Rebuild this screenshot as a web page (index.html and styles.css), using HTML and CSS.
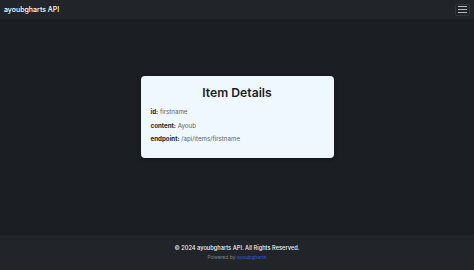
FILE: index.html
```html
<!DOCTYPE html>
<html lang="en">
<head>
<meta charset="utf-8">
<title>Item Details</title>
<link rel="stylesheet" href="styles.css">
</head>
<body>
<nav class="navbar">
  <span class="brand">ayoubgharts API</span>
  <button class="toggler" aria-label="menu">
    <span class="bar"></span><span class="bar"></span><span class="bar"></span>
  </button>
</nav>
<main class="main">
  <section class="card">
    <h1 class="title">Item Details</h1>
    <p class="field"><strong>id:</strong> <span class="val">firstname</span></p>
    <p class="field"><strong>content:</strong> <span class="val">Ayoub</span></p>
    <p class="field"><strong>endpoint:</strong> <span class="val">/api/items/firstname</span></p>
  </section>
</main>
<footer class="footer">
  <p class="copy">© 2024 ayoubgharts API. All Rights Reserved.</p>
  <p class="powered">Powered by <a class="link" href="#">ayoubgharts</a></p>
</footer>
</body>
</html>
```
FILE: styles.css
```css
html, body {
  margin: 0;
  padding: 0;
}
body {
  width: 474px;
  height: 270px;
  display: flex;
  flex-direction: column;
  background: #1b1e22;
  font-family: "Inter", "DejaVu Sans", sans-serif;
  color: #212529;
  overflow: hidden;
}
.navbar {
  height: 19px;
  flex: none;
  background: #212529;
  display: flex;
  align-items: center;
  justify-content: space-between;
  padding: 0 4px 0 4px;
  box-sizing: border-box;
}
.brand {
  color: #ffffff;
  font-size: 7px;
  font-weight: 500;
}
.toggler {
  width: 15px;
  height: 12px;
  padding: 0;
  margin: 0;
  border: 1px solid rgba(255,255,255,0.08);
  border-radius: 2px;
  background: transparent;
  display: flex;
  flex-direction: column;
  justify-content: center;
  align-items: center;
  gap: 2px;
}
.bar {
  display: block;
  width: 9px;
  height: 1px;
  background: #b8bbbe;
}
.main {
  flex: 1;
  display: flex;
  justify-content: center;
  align-items: flex-start;
  padding-top: 57px;
}
.card {
  width: 193px;
  box-sizing: border-box;
  background: #f0f8ff;
  border-radius: 4px;
  padding: 8px 10px 16px;
  box-shadow: 0 1px 4px rgba(0,0,0,0.3);
}
.title {
  margin: 0 0 6px;
  text-align: center;
  font-size: 12.2px;
  line-height: 18px;
  font-weight: 600;
  color: #1a1d21;
}
.field {
  margin: 0 0 6.5px;
  font-size: 6.2px;
  line-height: 7px;
  color: #212529;
}
.field:last-child {
  margin-bottom: 0;
}
.field strong {
  font-weight: 700;
}
.val {
  color: #5a5f66;
}
.footer {
  height: 35px;
  flex: none;
  background: #212529;
  display: flex;
  flex-direction: column;
  align-items: center;
  justify-content: flex-start;
  padding-top: 9px;
  box-sizing: border-box;
}
.copy {
  margin: 0;
  color: #f1f2f3;
  font-size: 5.7px;
  line-height: 8px;
  font-weight: 500;
}
.powered {
  margin: 2px 0 0;
  color: #7d838a;
  font-size: 5px;
  line-height: 7px;
}
.link {
  color: #2f5bd3;
  text-decoration: none;
}
```
